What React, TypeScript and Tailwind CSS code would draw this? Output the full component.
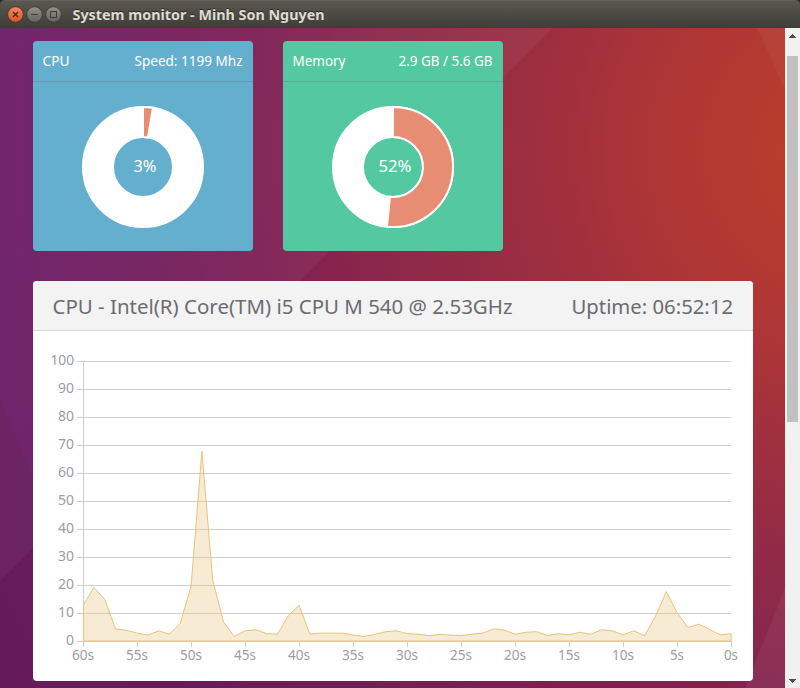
import React from "react";

const SAMPLES = [
  13.2, 19.3, 15.1, 4.5, 4.0, 3.0, 2.3, 3.8, 2.6, 6.5, 19.8, 68, 22, 7, 1.8, 3.8, 4.2, 2.8, 2.6, 9.2,
  12.9, 2.6, 3.0, 3.0, 3.0, 2.3, 1.8, 2.5, 3.5, 3.8, 2.8, 2.6, 2.1, 2.5, 2.3, 2.1, 2.6, 3.0, 4.5, 4.1,
  2.6, 3.3, 3.5, 2.1, 2.8, 2.4, 3.3, 2.6, 4.2, 3.8, 2.4, 3.8, 2.1, 9, 17.8, 10.3, 5, 6.2, 4.3, 2.4, 2.8,
];

function TitleBar() {
  return (
    <header className="relative flex h-7 shrink-0 items-center bg-[#2b2a27]">
      <div className="flex h-7 w-full items-center rounded-t-[5px] border-t border-[#63625a] bg-gradient-to-b from-[#5a5850] to-[#3e3d38] pl-[7px]">
        <svg width="56" height="18" viewBox="0 0 56 18" className="shrink-0">
          <defs>
            <linearGradient id="close" x1="0" y1="0" x2="0" y2="1">
              <stop offset="0" stopColor="#f58a62" />
              <stop offset="1" stopColor="#e0501c" />
            </linearGradient>
            <linearGradient id="control" x1="0" y1="0" x2="0" y2="1">
              <stop offset="0" stopColor="#93918a" />
              <stop offset="1" stopColor="#65635c" />
            </linearGradient>
          </defs>
          <circle cx="8.5" cy="8.5" r="7.8" fill="url(#close)" stroke="#373530" strokeWidth="0.8" />
          <circle cx="27.5" cy="8.5" r="7.8" fill="url(#control)" stroke="#373530" strokeWidth="0.8" />
          <circle cx="46.5" cy="8.5" r="7.8" fill="url(#control)" stroke="#373530" strokeWidth="0.8" />
          <path d="M6 6l5 5M11 6l-5 5" stroke="#45291c" strokeWidth="1.3" />
          <path d="M24 8.5h7" stroke="#3c3b36" strokeWidth="1" />
          <rect x="43.5" y="5.5" width="6" height="6" fill="none" stroke="#3c3b36" />
        </svg>
        <SizedText className="ml-[10px] font-bold [text-shadow:0_-1px_0_#2b2a26]" width={252} height={26} size={14} baseline={18} color="#dfdbd2">
          System monitor - Minh Son Nguyen
        </SizedText>
      </div>
    </header>
  );
}

type SizedTextProps = {
  width: number;
  height: number;
  size: number;
  baseline: number;
  color: string;
  className?: string;
  children: string;
};

/* A single line label fitted to a fixed width. */
function SizedText({ width, height, size, baseline, color, className = "", children }: SizedTextProps) {
  return (
    <svg width={width} height={height} className={`block shrink-0 overflow-visible ${className}`}>
      <text x="-0.5" y={baseline} fontSize={size} fill={color} textLength={width} lengthAdjust="spacingAndGlyphs">
        {children}
      </text>
    </svg>
  );
}

function Wallpaper() {
  return (
    <svg className="absolute inset-0" width="785" height="660" viewBox="0 28 785 660">
      <defs>
        <radialGradient id="wall" gradientUnits="userSpaceOnUse" cx="850" cy="150" r="1000">
          <stop offset="0.06" stopColor="#b93c2c" />
          <stop offset="0.14" stopColor="#b33931" />
          <stop offset="0.22" stopColor="#ab3437" />
          <stop offset="0.35" stopColor="#992d42" />
          <stop offset="0.47" stopColor="#8c284a" />
          <stop offset="0.58" stopColor="#802050" />
          <stop offset="0.75" stopColor="#6e1e58" />
          <stop offset="0.87" stopColor="#671b5c" />
          <stop offset="1" stopColor="#651b5a" />
        </radialGradient>
        <linearGradient id="violet" gradientUnits="userSpaceOnUse" x1="0" y1="0" x2="360" y2="0">
          <stop offset="0" stopColor="#7a2685" stopOpacity="0.26" />
          <stop offset="1" stopColor="#7a2685" stopOpacity="0" />
        </linearGradient>
      </defs>
      <rect y="28" width="785" height="660" fill="url(#wall)" />
      <path d="M0 28H553L0 581Z" fill="#fff" fillOpacity="0.045" />
      <path d="M0 28H553L55 526L0 400Z" fill="url(#violet)" />
      <path d="M757 28H785V89Z" fill="#fff" fillOpacity="0.045" />
      <path d="M785 588V688H745Z" fill="#fff" fillOpacity="0.055" />
    </svg>
  );
}

type GaugeProps = {
  title: string;
  titleWidth: number;
  detail: string;
  detailWidth: number;
  label: string;
  percent: number;
  percentWidth: number;
  className: string;
};

function Gauge({ title, titleWidth, detail, detailWidth, label, percent, percentWidth, className }: GaugeProps) {
  const angle = (percent / 100) * Math.PI * 2;
  const sin = Math.sin(angle);
  const cos = Math.cos(angle);
  const large = percent > 50 ? 1 : 0;
  const slice = `M110 26A60 60 0 ${large} 1 ${110 + 60 * sin} ${86 - 60 * cos}L${110 + 30 * sin} ${86 - 30 * cos}A30 30 0 ${large} 0 110 56Z`;
  return (
    <section className={`flex h-[210px] w-[220px] flex-col overflow-hidden rounded ${className}`}>
      <div className="flex h-[41px] items-center justify-between border-b border-[#646464]/25 px-[10px]">
        <SizedText width={titleWidth} height={40} size={13.6} baseline={25} color="#fff">{title}</SizedText>
        <SizedText width={detailWidth} height={40} size={13.6} baseline={25} color="#fff">{detail}</SizedText>
      </div>
      <svg width="220" height="169" viewBox="0 1 220 169">
        <circle cx="110" cy="86" r="45" fill="none" stroke="#fff" strokeWidth="32" />
        <path d={slice} fill="#e78d74" stroke="#fff" strokeWidth="2" />
        <text x={112 - percentWidth / 2} y="91" fontSize="16" fill="#fff" textLength={percentWidth} lengthAdjust="spacingAndGlyphs">
          {label}
        </text>
      </svg>
    </section>
  );
}

function UsageChart() {
  const x = (i: number) => 50.5 + i * 10.8;
  const y = (v: number) => 310.5 - v * 2.8;
  const line = SAMPLES.map((v, i) => `${x(i) - (i ? 0.4 : 0)} ${y(v)}`).join("L");
  const levels = [0, 10, 20, 30, 40, 50, 60, 70, 80, 90, 100];
  const seconds = [60, 55, 50, 45, 40, 35, 30, 25, 20, 15, 10, 5, 0];
  return (
    <svg width="720" height="350" className="block">
      {levels.map((v) => {
        const w = v === 100 ? 23.5 : v === 0 ? 8 : 16;
        return (
          <g key={v}>
            <path d={`M44 ${y(v)}H698`} stroke="#cfcfcf" />
            <text x={41 - w} y={y(v) + 3.5} fontSize="13.6" fill="#9c9ca2" textLength={w} lengthAdjust="spacingAndGlyphs">{v}</text>
          </g>
        );
      })}
      <path d="M50.5 30V316" stroke="#cfcfcf" />
      {seconds.map((s, i) => {
        const w = s >= 10 ? 22 : 14;
        return (
          <g key={s}>
            <path d={`M${x(i * 5)} 310V316`} stroke="#cfcfcf" />
            <text x={x(i * 5) - w / 2 - 0.5} y="329" fontSize="13.6" fill="#9c9ca2" textLength={w} lengthAdjust="spacingAndGlyphs">{s + "s"}</text>
          </g>
        );
      })}
      <path d={`M50.5 310L${line}V310Z`} fill="#e6c37a" fillOpacity="0.33" stroke="#e6c37a" />
    </svg>
  );
}

export default function App() {
  return (
    <div className="flex h-[688px] w-[800px] flex-col overflow-hidden font-['Noto_Sans','Open_Sans',sans-serif]">
      <TitleBar />
      <div className="flex min-h-0 flex-1">
        <main className="relative w-[785px] overflow-hidden">
          <Wallpaper />
          <div className="relative flex flex-col gap-[30px] pl-[33px] pt-[13px]">
            <div className="flex gap-[30px]">
              <Gauge title="CPU" titleWidth={27} detail="Speed: 1199 Mhz" detailWidth={108} label="3%" percent={2.65} percentWidth={23} className="bg-[#64aece]" />
              <Gauge title="Memory" titleWidth={53} detail="2.9 GB / 5.6 GB" detailWidth={94} label="52%" percent={51.6} percentWidth={33} className="bg-[#54c8a0]" />
            </div>
            <section className="h-[400px] w-[720px] overflow-hidden rounded bg-white">
              <div className="flex h-[50px] items-center justify-between border-b border-[#dadada] bg-[#f3f3f3] px-5">
                <SizedText width={460} height={49} size={19.6} baseline={33} color="#6b6b72">
                  CPU - Intel(R) Core(TM) i5 CPU M 540 @ 2.53GHz
                </SizedText>
                <SizedText width={161.5} height={49} size={19.6} baseline={33} color="#6b6b72">Uptime: 06:52:12</SizedText>
              </div>
              <UsageChart />
            </section>
          </div>
        </main>
        <aside className="flex w-[15px] flex-col items-center bg-[#f1f1f1]">
          <svg width="15" height="28" className="shrink-0">
            <path d="M4 10V9H5V8H6V7H7V6H8V7H9V8H10V9H11V10Z" fill="#505050" />
          </svg>
          <div className="h-[366px] w-[11px] bg-[#c1c1c1]" />
          <svg width="15" height="14" className="mt-auto shrink-0">
            <path d="M4 5H11V6H10V7H9V8H8V9H7V8H6V7H5V6H4Z" fill="#505050" />
          </svg>
        </aside>
      </div>
    </div>
  );
}
